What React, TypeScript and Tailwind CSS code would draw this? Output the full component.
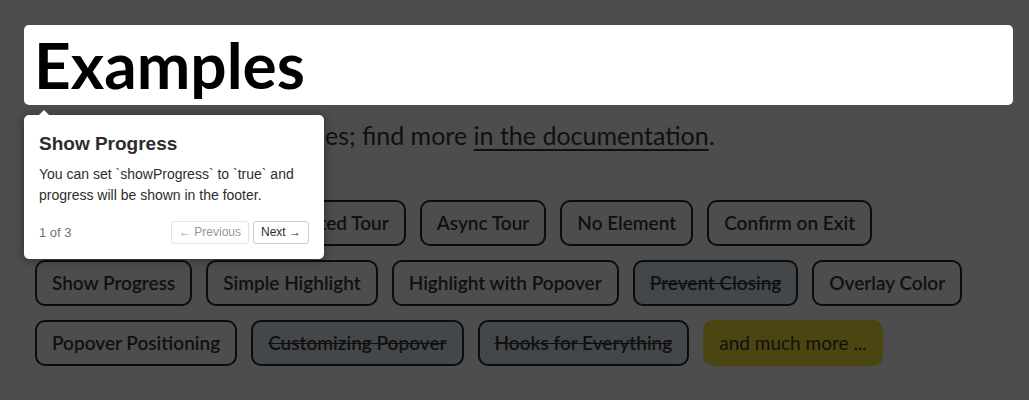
const examples = [
  { label: "Animated Tour" },
  { label: "Non-Animated Tour" },
  { label: "Async Tour" },
  { label: "No Element" },
  { label: "Confirm on Exit" },
  { label: "Show Progress" },
  { label: "Simple Highlight" },
  { label: "Highlight with Popover" },
  { label: "Prevent Closing", struck: true },
  { label: "Overlay Color" },
  { label: "Popover Positioning" },
  { label: "Customizing Popover", struck: true },
  { label: "Hooks for Everything", struck: true },
  { label: "and much more ...", more: true },
];

const pageFont = `font-["Lato",sans-serif]`;

const Popover = () => (
  <div className="absolute left-[24px] top-[115px] w-[300px] rounded-[5px] bg-white p-[15px] text-[#2d2d2d] shadow-[0_1px_10px_rgba(0,0,0,0.4)] font-['Liberation_Sans',Arial,sans-serif]">
    <div className="absolute -top-[5px] left-[15px] h-0 w-0 border-x-[5px] border-b-[5px] border-x-transparent border-b-white" />
    <div className="text-[19px] font-bold leading-[1.5]">Show Progress</div>
    <div className="mt-[5px] text-[14px] leading-[1.5]">
      You can set `showProgress` to `true` and progress will be shown in the
      footer.
    </div>
    <div className="mt-[15px] flex items-center justify-between">
      <span className="text-[13px] text-[#727272]">1 of 3</span>
      <div className="flex gap-[4px]">
        <button className="rounded-[3px] border border-[#ccc] bg-white px-[7px] py-[3px] text-[12px] leading-[1.3] opacity-50">
          ← Previous
        </button>
        <button className="rounded-[3px] border border-[#ccc] bg-white px-[7px] py-[3px] text-[12px] leading-[1.3]">
          Next →
        </button>
      </div>
    </div>
  </div>
);

export default function App() {
  return (
    <div className={`relative h-[400px] w-full overflow-hidden bg-[#4d4d4d] pl-[24px] pr-[16px] pt-[25px] text-[#101010] ${pageFont}`}>
      <div className="rounded-[5px] bg-white p-[10px]">
        <h1 className="h-[60px] text-[64px] font-bold leading-[60px] text-black">
          Examples
        </h1>
      </div>
      <p className="mt-[12px] pl-[10px] text-[25px] leading-[36px]">
        Here are just a few examples; find more{" "}
        <span className="underline decoration-2 underline-offset-[4px]">
          in the documentation
        </span>
        .
      </p>
      <div className="mt-[47px] flex flex-wrap gap-[14px] pl-[11px]">
        {examples.map((e) => (
          <button
            key={e.label}
            className={`h-[46px] rounded-[10px] border-2 text-[19px] ${
              e.more
                ? "border-[#4b4512] bg-[#4b4512] px-[14px] font-normal"
                : e.struck
                  ? "border-[#0c0c0c] bg-[#44474a] px-[15px] font-semibold line-through"
                  : "border-[#0c0c0c] px-[15px] font-semibold"
            }`}
          >
            {e.label}
          </button>
        ))}
      </div>
      <Popover />
    </div>
  );
}
